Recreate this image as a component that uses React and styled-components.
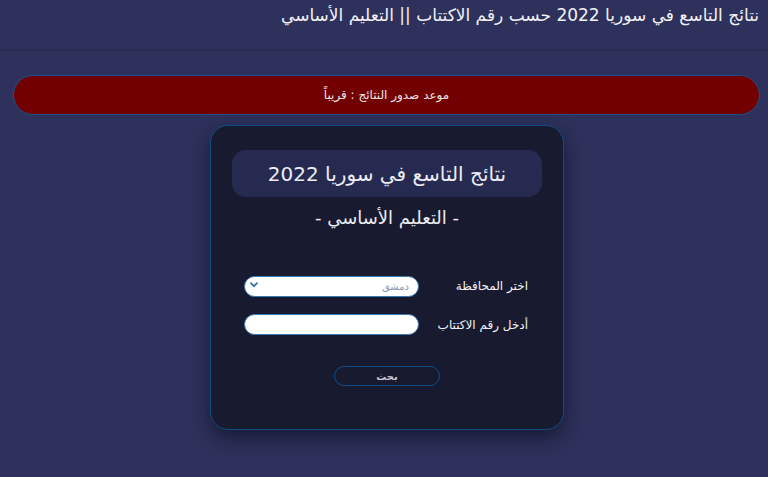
import styled, { createGlobalStyle } from 'styled-components';

const GlobalStyle = createGlobalStyle`
    html, body {
        margin: 0;
        padding: 0;
        background: #2d315b;
        font-family: "DejaVu Sans", "Noto Sans", sans-serif;
        color: #fff;
    }
    * { box-sizing: border-box; }
`;

const Page = styled.div`
    width: 100%;
    min-height: 477px;
    direction: rtl;
    padding-bottom: 40px;
`;

const Header = styled.header`
    height: 51px;
    border-bottom: 1px solid rgba(20, 22, 50, 0.22);
    padding: 5px 9px 0 0;
`;

const PageTitle = styled.h1`
    margin: 0;
    font-size: 17px;
    font-weight: 400;
    color: #f2f2f6;
    text-align: right;
`;

const Notice = styled.div`
    margin: 24px 8px 0 13px;
    height: 40px;
    background: #730000;
    border: 1px solid #1f4f86;
    border-radius: 20px;
    display: flex;
    align-items: center;
    justify-content: center;
    font-size: 12px;
    color: #f0e6e6;
`;

const Card = styled.div`
    width: 354px;
    margin: 10px auto 0;
    transform: translateX(3px);
    background: #181a2f;
    border: 1px solid #0f4d85;
    border-radius: 18px;
    box-shadow: 0 8px 18px rgba(10, 10, 25, 0.55);
    padding: 24px 21px 43px;
`;

const TitleBox = styled.div`
    height: 47px;
    background: #262a50;
    border-radius: 14px;
    display: flex;
    align-items: center;
    justify-content: center;
    font-size: 20px;
    color: #ecedf4;
`;

const SubTitle = styled.div`
    margin-top: 10px;
    text-align: center;
    font-size: 18px;
    color: #ecedf4;
`;

const Form = styled.form`
    margin-top: 47px;
    padding: 0 14px 0 12px;
    display: grid;
    grid-template-columns: 109px 1fr;
    row-gap: 18px;
    align-items: center;
`;

const Label = styled.label`
    font-size: 12px;
    color: #f4f4f8;
    text-align: right;
`;

const Field = styled.div`
    position: relative;
    height: 21px;
`;

const Select = styled.select`
    appearance: none;
    width: 100%;
    height: 21px;
    border-radius: 11px;
    border: 1.5px solid #3a78b8;
    background: #fff;
    padding: 0 9px 0 18px;
    font-family: inherit;
    font-size: 10px;
    color: #8c99b5;
    direction: rtl;
    outline: none;
`;

const Chevron = styled.svg`
    position: absolute;
    left: 6px;
    top: 7px;
    pointer-events: none;
`;

const Input = styled.input`
    width: 100%;
    height: 21px;
    border-radius: 11px;
    border: 1.5px solid #3a78b8;
    background: #fff;
    padding: 0 10px;
    outline: none;
`;

const Actions = styled.div`
    margin-top: 31px;
    display: flex;
    justify-content: center;
`;

const Button = styled.button`
    width: 106px;
    height: 20px;
    border-radius: 10px;
    border: 1.5px solid #0f4d85;
    background: transparent;
    color: #c9cbd8;
    font-family: inherit;
    font-size: 10px;
    font-weight: bold;
    padding: 0;
`;

const App = () => {
  return (
    <Page>
      <GlobalStyle />
      <Header>
        <PageTitle>نتائج التاسع في سوريا 2022 حسب رقم الاكتتاب || التعليم الأساسي</PageTitle>
      </Header>

      <Notice>موعد صدور النتائج : قريباً</Notice>

      <Card>
        <TitleBox>نتائج التاسع في سوريا 2022</TitleBox>
        <SubTitle>- التعليم الأساسي -</SubTitle>

        <Form>
          <Label>اختر المحافظة</Label>
          <Field>
            <Select defaultValue="دمشق">
              <option>دمشق</option>
              <option>حلب</option>
              <option>حمص</option>
            </Select>
            <Chevron width="8" height="6" viewBox="0 0 8 6">
              <path d="M1 1.2 L4 4.2 L7 1.2" fill="none" stroke="#3a6fae" strokeWidth="1.8" strokeLinecap="round" />
            </Chevron>
          </Field>

          <Label>أدخل رقم الاكتتاب</Label>
          <Field>
            <Input type="text" />
          </Field>
        </Form>

        <Actions>
          <Button type="button">بحث</Button>
        </Actions>
      </Card>
    </Page>
  )
}

export default App;
